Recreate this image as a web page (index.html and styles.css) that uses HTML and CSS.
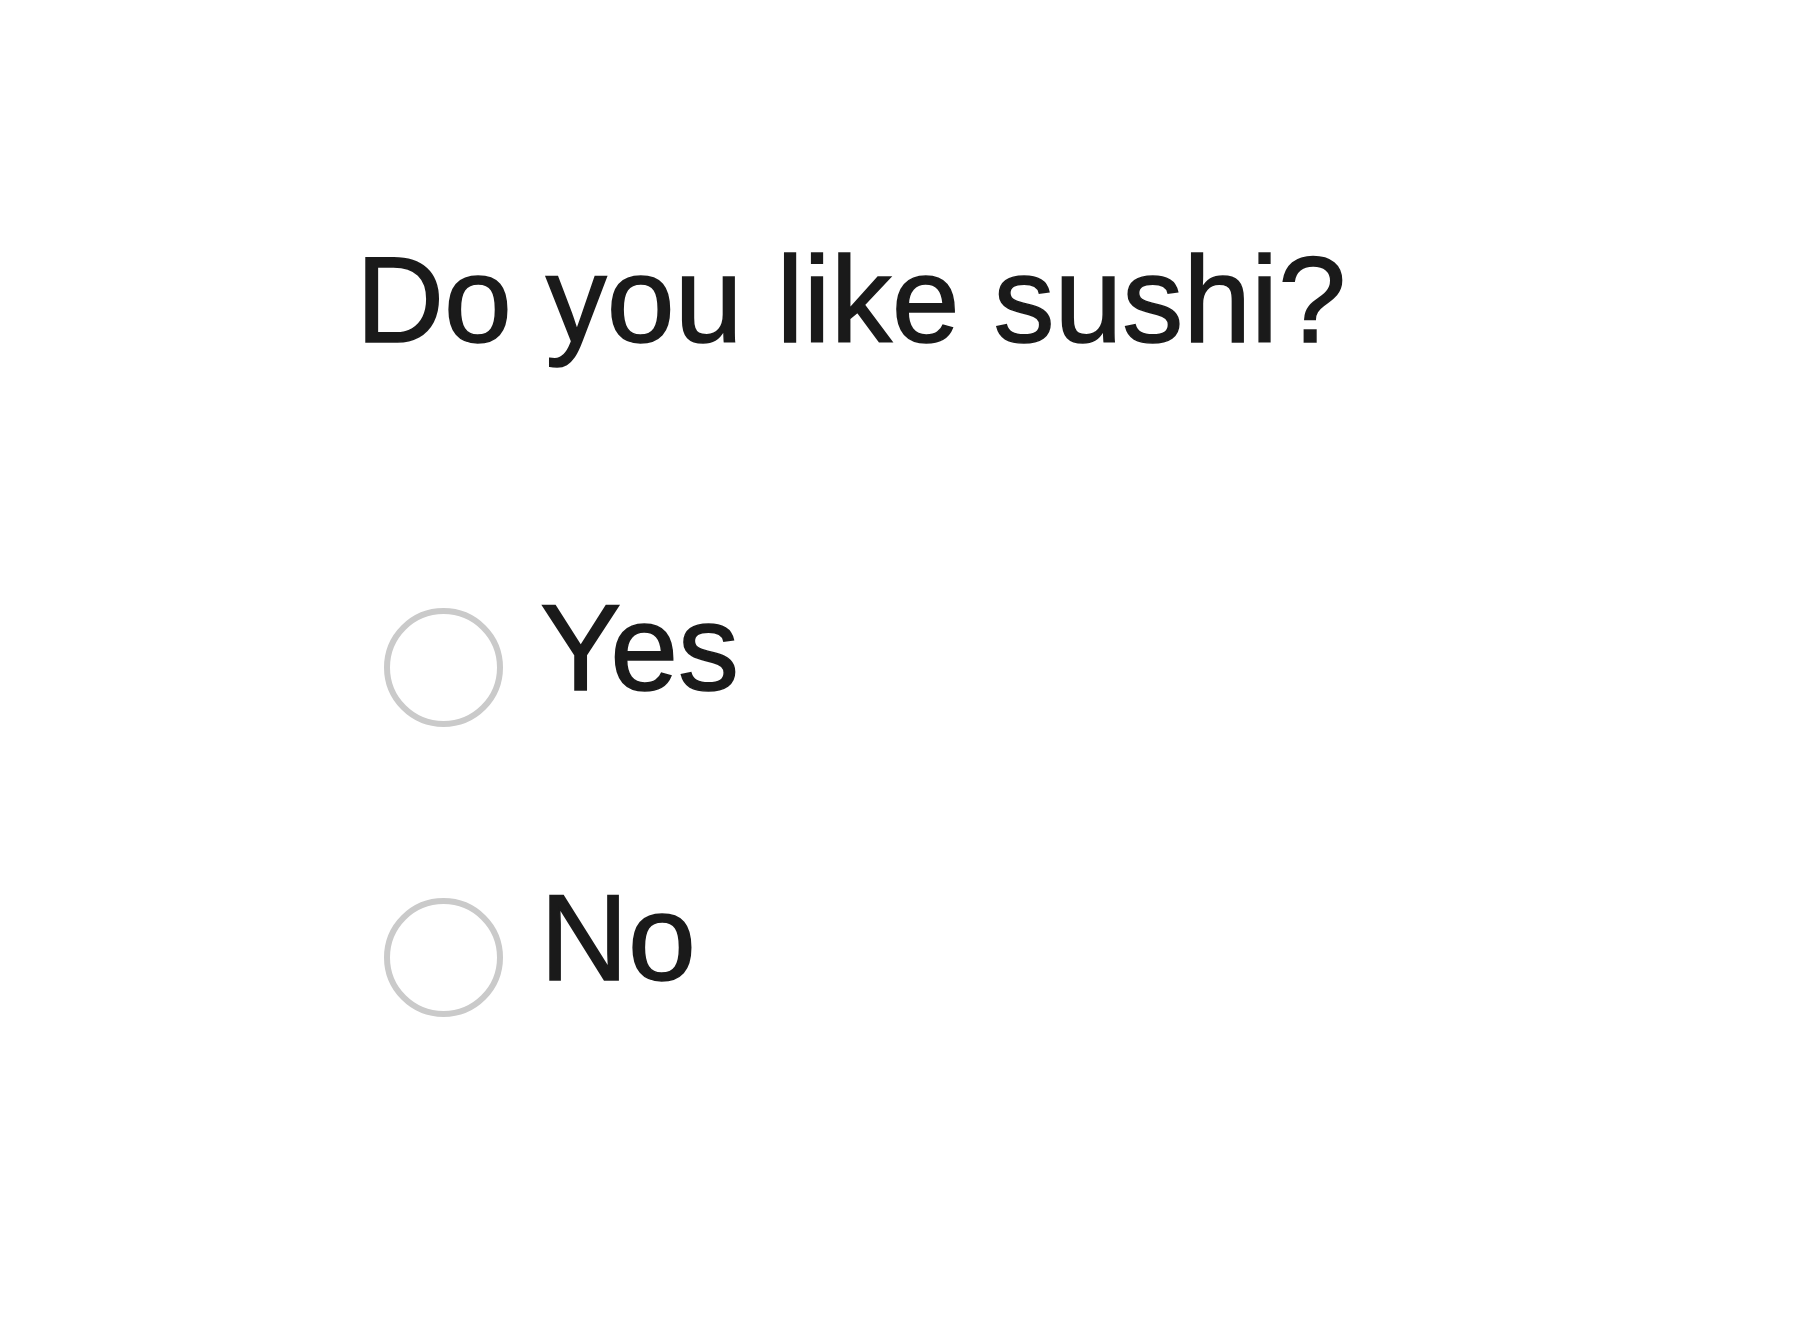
FILE: index.html
```html
<!DOCTYPE html>
<html lang="en">
<head>
<meta charset="utf-8">
<title>Sushi</title>
<link rel="stylesheet" href="styles.css">
</head>
<body>
<form class="form">
  <h1 class="question">Do you like sushi?</h1>
  <div class="options">
    <label class="option"><input class="radio" type="radio" name="sushi" value="yes"><span class="label-text">Yes</span></label>
    <label class="option"><input class="radio" type="radio" name="sushi" value="no"><span class="label-text">No</span></label>
  </div>
</form>
</body>
</html>
```

FILE: styles.css
```css
html, body {
  margin: 0;
  padding: 0;
  background: #ffffff;
}
body {
  width: 1800px;
  height: 1338px;
  overflow: hidden;
  font-family: "Liberation Sans", Arial, Helvetica, sans-serif;
  color: #1a1a1a;
}
.form {
  padding: 239px 0 0 356px;
  margin: 0;
}
.question {
  margin: 0;
  font-size: 122px;
  line-height: 122px;
  font-weight: normal;
  -webkit-text-stroke: 1.5px #1a1a1a;
}
.options {
  margin-top: 226px;
  display: flex;
  flex-direction: column;
  gap: 168px;
}
.option {
  display: flex;
  align-items: flex-start;
  height: 122px;
  font-size: 122px;
  line-height: 122px;
}
.radio {
  appearance: none;
  -webkit-appearance: none;
  box-sizing: border-box;
  width: 119px;
  height: 119px;
  margin: 21px 0 0 28px;
  border: 6px solid #cacaca;
  border-radius: 50%;
  background: #ffffff;
  flex: none;
}
.label-text {
  margin-left: 37px;
  -webkit-text-stroke: 1.5px #1a1a1a;
}
```
